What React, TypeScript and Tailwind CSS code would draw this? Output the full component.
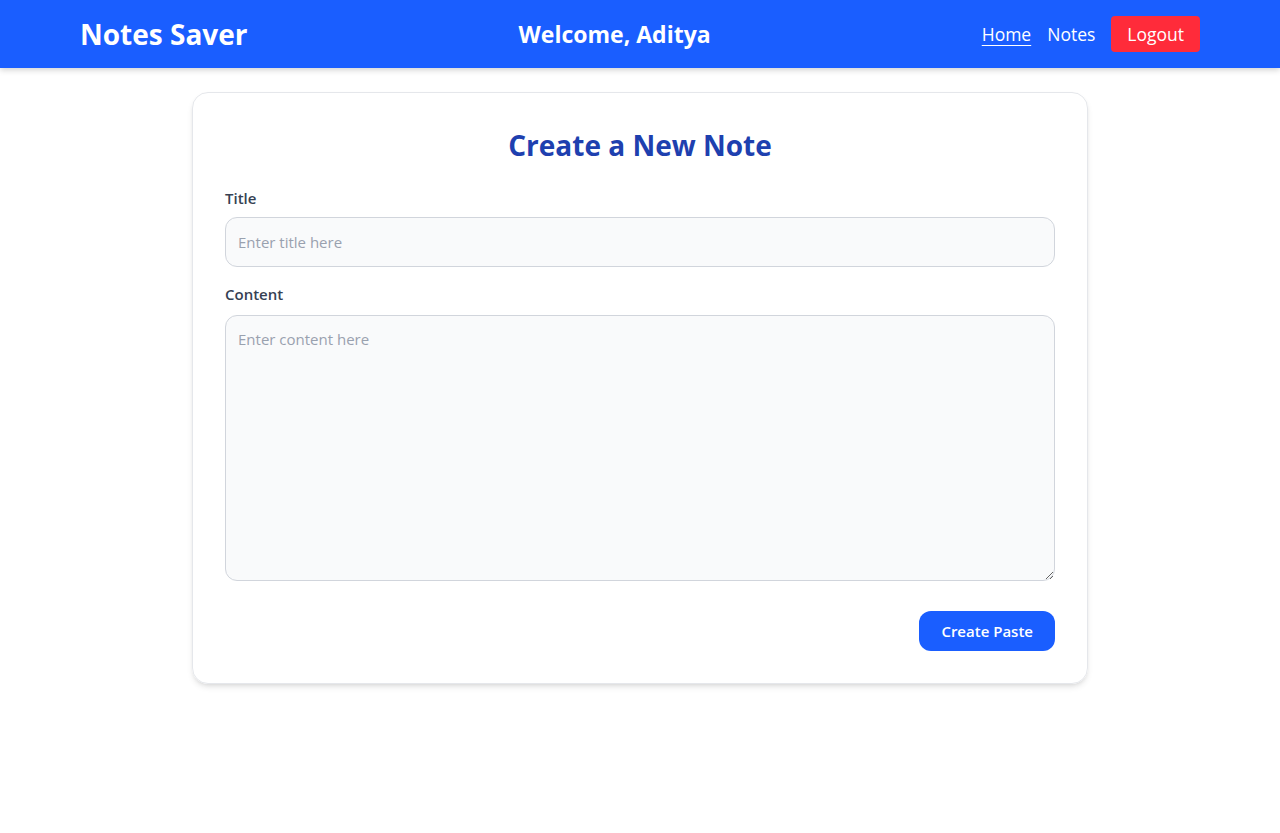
import React from "react";

export default function App() {
  return (
    <div className="min-h-screen bg-white" style={{ fontFamily: '"Open Sans", "Noto Sans", sans-serif' }}>
      <nav className="h-[68px] bg-[#1a5eff] shadow-[0_2px_6px_rgba(0,0,0,0.18)] flex items-center justify-between px-20 text-white">
        <h1 className="text-[28px] leading-9 font-bold">Notes Saver</h1>
        <h2 className="text-[23px] leading-8 font-bold">Welcome, Aditya</h2>
        <div className="flex items-center gap-4 text-[17.5px]">
          <a className="underline underline-offset-4">Home</a>
          <a>Notes</a>
          <button className="bg-[#ff2b3a] rounded px-4 h-9">Logout</button>
        </div>
      </nav>
      <main className="flex justify-center pt-6">
        <div className="w-[896px] border border-gray-200 rounded-2xl shadow-md px-8 pt-[34px] pb-8">
          <h2 className="text-center text-[28px] leading-9 font-bold text-[#1e40af] mb-6">Create a New Note</h2>
          <label className="block text-[15px] leading-[22px] font-semibold text-gray-700 mb-2">Title</label>
          <input
            className="w-full h-[50px] rounded-xl border border-gray-300 bg-gray-50 px-3 text-[15px] placeholder:text-gray-400 mb-4"
            placeholder="Enter title here"
          />
          <label className="block text-[15px] leading-[22px] font-semibold text-gray-700 mb-[10px]">Content</label>
          <textarea
            className="w-full h-[266px] rounded-xl border border-gray-300 bg-gray-50 px-3 py-3 text-[15px] placeholder:text-gray-400 block"
            placeholder="Enter content here"
          />
          <div className="flex justify-end mt-[30px]">
            <button className="bg-[#1a5eff] text-white font-semibold text-[15px] rounded-xl h-10 px-[22px]">Create Paste</button>
          </div>
        </div>
      </main>
    </div>
  );
}
